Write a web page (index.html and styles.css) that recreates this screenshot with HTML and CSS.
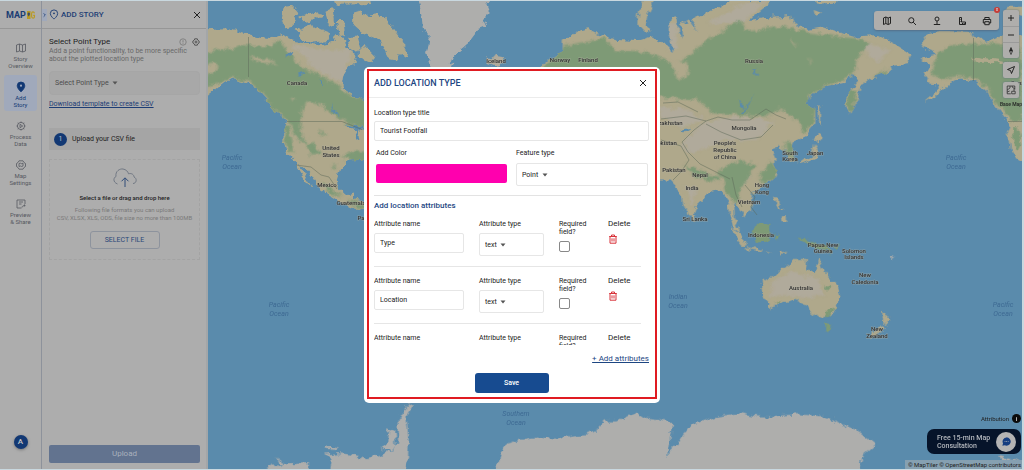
FILE: index.html
```html
<!DOCTYPE html>
<html lang="en">
<head>
<meta charset="utf-8">
<title>MAPOG - Add Story</title>
<link rel="stylesheet" href="styles.css">
</head>
<body>
<div class="app">
  <nav class="rail">
    <div class="logo">MAP<svg class="logo-mark" viewBox="0 0 10 10"><rect x="0" y="0" width="4.4" height="10" fill="#b99a22"/><path d="M2.2 2a1.5 1.5 0 0 1 1.5 1.5C3.700 5 2.200 7 2.200 7S.7 5 .7 3.500A1.500 1.500 0 0 1 2.200 2Z" fill="#3b4a63"/><path d="M9.200 3C9 .5 5.800.5 5.800 3v4c0 2.600 3.500 2.600 3.500.2V5.500H7.800" fill="none" stroke="#b99a22" stroke-width="1.500"/></svg></div>
    <div class="rail-items">
      <a class="rail-item" href="#"><svg class="ic" viewBox="0 0 12 12"><path d="M1.500 3v7l3-1 3 1 3-1V2l-3 1-3-1ZM4.500 2v7M7.500 3v7"/></svg>Story<br>Overview</a>
      <a class="rail-item active" href="#"><svg class="ic" viewBox="0 0 12 12"><path class="solid" d="M6 1a3.800 3.800 0 0 1 3.800 3.800C9.800 7.500 6 11 6 11S2.200 7.500 2.200 4.800A3.800 3.800 0 0 1 6 1Z"/><circle cx="6" cy="4.700" r="1.100" fill="#a1aabd" stroke="none"/></svg>Add<br>Story</a>
      <a class="rail-item" href="#"><svg class="ic" viewBox="0 0 12 12"><circle cx="6" cy="6" r="3.600"/><path d="M6 1.500v1M6 9.500v1M1.500 6h1M9.500 6h1M2.800 2.800l.7.7M8.500 8.500l.7.7M2.800 9.200l.7-.7M8.500 3.500l.7-.7M5 4.300v3.400L7.700 6Z"/></svg>Process<br>Data</a>
      <a class="rail-item" href="#"><svg class="ic" viewBox="0 0 12 12"><path d="M4 1.800h4L9 3.500l1.500 1V7.500L9 8.500 8 10.200H4L3 8.500l-1.500-1V4.500L3 3.500ZM4 4.500v3l1.400-.5 1.300.5L8 7V4.200l-1.300.5-1.300-.5Z"/></svg>Map<br>Settings</a>
      <a class="rail-item" href="#"><svg class="ic" viewBox="0 0 12 12"><path d="M10 6V2H2v8h4.500M4 4h4M4 6h2.500M7 9.500c.3-1.500 1-2 3-2M9 6.500l1.200 1L9 8.700"/></svg>Preview<br>&amp; Share</a>
    </div>
    <button class="avatar" type="button">A</button>
  </nav>

  <aside class="panel">
    <header class="panel-head">
      <button class="toggle" type="button" aria-label="Collapse"><svg class="ic" viewBox="0 0 6 8"><path d="M2 2l2 2-2 2"/></svg></button>
      <svg class="ic head-pin" viewBox="0 0 10 12"><path d="M5 1a4 4 0 0 1 4 4c0 2.800-4 6-4 6S1 7.800 1 5a4 4 0 0 1 4-4Z"/><circle cx="5" cy="4.700" r="1" fill="#1d3d75" stroke="none"/></svg>
      <h1>ADD STORY</h1>
      <button class="close" type="button" aria-label="Close"><svg viewBox="0 0 8 8"><path d="M1 1l6 6M7 1L1 7"/></svg></button>
    </header>
    <div class="panel-body">
      <div class="row-title"><h2>Select Point Type</h2>
        <svg class="ic tiny" viewBox="0 0 8 8"><circle cx="4" cy="4" r="3.200"/><path d="M4 2.200v2.300M4 5.200v.7"/></svg>
        <svg class="ic tiny dark" viewBox="0 0 8 8"><path d="M2.700.8h2.600l.3 1.200 1.500 1v2l-1.500 1-.3 1.200H2.700L2.400 6 .9 5V3l1.500-1Z"/><circle cx="4" cy="4" r="1"/></svg>
      </div>
      <p class="desc">Add a point functionality, to be more specific about the plotted location type</p>
      <label class="pick pick-dim"><select aria-label="Select Point Type"><option>Select Point Type</option></select><svg class="caret" viewBox="0 0 6 4"><path d="M.5.500h5L3 3.500Z"/></svg></label>
      <a class="template" href="#">Download template to create CSV</a>
      <div class="step"><span class="num">1</span>Upload your CSV file</div>
      <div class="drop">
        <svg class="cloud" viewBox="0 0 24 20"><path d="M4.500 16C-.5 14 .5 9.500 3 8.500 2 3 7 .5 10 1c3 .5 5 2.500 5.500 4.800C19 4.800 21 7 21 9c3.500 1.500 2.500 6.500-1 6.500" stroke="#727984"/><path d="M12 19V10M8.500 13.300L12 9.800l3.500 3.500" stroke="#304c79"/></svg>
        <strong>Select a file or drag and drop here</strong>
        <p>Following file formats you can upload<br>CSV, XLSX, XLS, ODS, file size no more than 100MB</p>
        <button class="select-file" type="button">SELECT FILE</button>
      </div>
      <button class="upload" type="button">Upload</button>
    </div>
  </aside>

  <main class="map">
    <svg class="world" viewBox="208 1 814 468" preserveAspectRatio="xMidYMid slice">
      <defs>
        <filter id="coast" x="190" y="-10" width="850" height="490" filterUnits="userSpaceOnUse" color-interpolation-filters="sRGB">
          <feTurbulence type="fractalNoise" baseFrequency="0.13" numOctaves="3" seed="4"/>
          <feDisplacementMap in="SourceGraphic" scale="8" xChannelSelector="R" yChannelSelector="G"/>
        </filter>
        <filter id="blend" x="-5%" y="-5%" width="110%" height="110%" color-interpolation-filters="sRGB"><feGaussianBlur stdDeviation="3"/></filter>
        <clipPath id="cNA"><path d="M0 88L60 85 110 98 150 108 200 115 235 102 262 122 300 128 345 136 385 128 395 105 420 115 425 145 455 165 450 185 432 200 415 225 412 250 430 278 470 297 490 290 650 300 650 420 490 475 470 480 430 482 405 510 396 540 400 570 420 585 448 578 446 598 490 608 490 640 440 622 390 598 345 568 322 530 300 503 272 492 245 455 232 410 246 365 215 335 180 295 150 262 120 245 90 236 60 245 0 292Z"/></clipPath>
        <clipPath id="cAS"><path d="M-260 205L-184 150-184 122-140 97-105 88-57 108-20 120 40 123 80 110 120 130 135 148 150 160 135 90 140 55 158 52 163 95 175 120 172 75 195 58 225 100 205 60 240 45 280 25 330 0 450 0 400 40 378 60 450 50 500 45 512 72 550 90 600 82 640 95 690 110 760 105 810 130 866 165 850 190 800 195 805 212 740 235 712 255 702 305 680 345 668 320 668 280 705 240 690 225 660 250 600 260 560 290 545 310 575 325 575 370 545 410 512 425 505 440 515 480 498 488 482 450 465 440 440 447 455 480 455 530 420 562 385 575 382 600 385 635 360 650 340 620 328 610 330 650 350 700 335 690 318 640 310 600 290 570 262 575 215 620 208 650 190 650 168 575 140 545 80 545-260 500Z"/></clipPath>
      </defs>
      <rect x="208" width="816" height="470" fill="#5a8bac"/>
      <g filter="url(#coast)">
        <g transform="translate(205 0) scale(.333)">
          <path class="tan" d="M0 88L60 85 110 98 150 108 200 115 235 102 262 122 300 128 345 136 385 128 395 105 420 115 425 145 455 165 450 185 432 200 415 225 412 250 430 278 470 297 490 290 650 300 650 420 490 475 470 480 430 482 405 510 396 540 400 570 420 585 448 578 446 598 490 608 490 640 440 622 390 598 345 568 322 530 300 503 272 492 245 455 232 410 246 365 215 335 180 295 150 262 120 245 90 236 60 245 0 292Z"/>
          <g clip-path="url(#cNA)"><g filter="url(#blend)">
            <path class="pale" d="M260 130L350 150 440 150 412 250 370 230 320 200Z"/>
            <path class="green" d="M0 155L60 150 110 135 180 142 225 122 250 160 300 205 350 228 400 255 430 285 500 300 600 330 600 400 480 385 430 370 390 345 350 315 300 305 290 330 285 400 310 430 280 420 250 365 210 330 170 280 130 242 80 232 50 245 0 262Z"/>
            <path class="green" d="M235 380L250 375 262 420 265 460 245 440ZM300 435l30-5 20 30-30 5ZM345 385l20 25-15-5ZM405 470l40-15 60 0v25l-60 5ZM395 490l-15 20 15-5ZM350 550l40 25 20 15-40-10ZM430 598l60 15v25l-50-20Z"/>
            <path class="tan" d="M130 170l70 10 20 12-60-4ZM255 290l20 8-10 5ZM0 195l35-5 10 15-45 25Z"/>
          </g></g>
          <path class="tan" d="M232 22L262 18 280 40 265 78 240 82 228 55ZM275 90L320 72 350 88 380 100 365 122 330 128 290 118ZM285 50l55-20 15 20-50 18ZM365 32l18-8 5 45-16 8ZM380 0L495 0 498 12 400 14ZM395 60l20 0 5 45-15 5ZM445 35L470 28 475 45 540 55 560 80 590 120 608 155 603 178 585 165 575 182 555 178 540 150 525 120 500 110 470 98 445 75ZM465 150l15-15 30 30-10 25-35-15ZM430 110l25 0 10 40-25 5ZM270 492l12 5 22 35 18 30-8-3-25-35ZM495 40l28-4 6 35-20 4Z"/>
          <path class="ice" d="M640 -10L862 -10 845 15 855 40 835 60 845 80 820 90 790 130 750 165 730 220 685 220 667 160 675 110 655 90 650 45Z"/>
          <path class="pale" d="M843 172L858 178 875 168 898 172 900 188 870 196 848 188Z"/>
          <path class="lake" d="M240 165l25-12-5 20ZM275 225l30-8-18 14ZM375 310l15 25 15 10-15-4ZM425 370l45 10 8 10-20-2 6 35-10-8-4-28ZM345 240l12 20-10-6Z"/>
        </g>
        <g transform="translate(624 0) scale(.333)">
          <path class="tan" d="M-260 205L-184 150-184 122-140 97-105 88-57 108-20 120 40 123 80 110 120 130 135 148 150 160 135 90 140 55 158 52 163 95 175 120 172 75 195 58 225 100 205 60 240 45 280 25 330 0 450 0 400 40 378 60 450 50 500 45 512 72 550 90 600 82 640 95 690 110 760 105 810 130 866 165 850 190 800 195 805 212 740 235 712 255 702 305 680 345 668 320 668 280 705 240 690 225 660 250 600 260 560 290 545 310 575 325 575 370 545 410 512 425 505 440 515 480 498 488 482 450 465 440 440 447 455 480 455 530 420 562 385 575 382 600 385 635 360 650 340 620 328 610 330 650 350 700 335 690 318 640 310 600 290 570 262 575 215 620 208 650 190 650 168 575 140 545 80 545-260 500Z"/>
          <g clip-path="url(#cAS)"><g filter="url(#blend)">
            <path class="pale" d="M250 70L350 15 430 0 350 70ZM130 70h30v80h-30ZM100 320L200 330 240 360 170 380 110 350ZM245 365L350 350 450 365 400 420 300 425 200 460 170 430ZM180 560l40 0-15 60ZM700 120l100 30-40 40ZM350 510l30 20-25 30Z"/>
            <path class="green" d="M-250 210L-180 140-60 115-30 150 60 155 110 175 150 195 210 160 240 125 300 90 350 60 370 95 480 78 540 95 640 110 700 115 735 130 700 170 690 225 600 260 555 290 575 320 570 370 540 400 530 370 470 325 420 350 350 345 270 340 220 300 140 295 60 290-60 290ZM670 270l30 0-10 60-15 10ZM280 515l60-30 60 5-20 30-30 50-10 50-30-40-10-40ZM440 485l15 10v40l-30 20-20-15ZM480 430l25 0 5 45-20-5ZM745 235l50-30-10 18ZM180 490l70 35 40 5-10 15-70-15Z"/>
            <path class="tan" d="M140 180l50 10 0 40-30 10ZM555 170l8 20-6 0ZM595 180l20 15ZM500 115l20 20-15-5Z"/>
          </g></g>
          <path class="tan" d="M60 0L92 0 70 45 66 75 80 98 62 95 40 72 42 45ZM575 0l60 0 0 8-55 3ZM570 30l22 8-20 8ZM580 405L600 412 578 428 570 418ZM574 432l10 20-8 22-35 15-22 5 18-14 30-12ZM584 320l8 0 0 55-6-10ZM450 592l10 0 5 30 15 12-18-8ZM468 650l18-2 0 18-16-2ZM385 575l12 0-3 12ZM453 520l8 0-4 15ZM208 642l8 8-4 12-6-8Z"/>
          <path class="tan" d="M890 130L915 98 950 92 1030 95 1060 112 1090 125 1130 110 1220 100 1220 500 1178 475 1160 450 1150 400 1158 370 1122 325 1095 280 1060 248 1010 236 975 250 940 285 900 308 940 272 955 255 910 250 897 215 922 200 895 187 895 172 930 165 925 150 900 142ZM1150 20l60 0 0 30-60-10Z"/>
          <path class="green" filter="url(#blend)" d="M940 160L1000 130 1045 135 1100 130 1195 140 1195 365 1165 360 1120 310 1090 262 1050 235 1000 228 960 240 925 225Z"/>
          <path class="green" d="M1168 385l14 0 10 45-10 20-12-20Z"/>
          <path class="tan" d="M1048 170l90 12 30 10-110-4Z"/>
          <path class="lake" d="M388 285l-8 30-20 25-6-3 22-22ZM345 295l15 25 0 8-10-10ZM170 390l30-6-20 14ZM385 208l15 0-2 16Z"/>
          <path class="green" d="M385 690L410 670 440 675 435 725 400 728Z"/>
        </g>
        <g transform="translate(624 235) scale(.333)">
          <path class="tan" d="M413 140L450 125 480 95 510 75 550 75 545 105 575 115 587 68 600 110 640 150 650 185 630 240 590 252 565 235 555 210 520 195 480 205 435 222 420 190ZM742 308l30-38 12 8-30 30-15 8ZM775 228l14 16 14 4-12 22-12-5ZM325-25L355 5 368 32 355 30 335 5ZM365 36l50 8 0 6-48-8ZM425 48l20 3-10 4ZM470 50l22-3-18 12Z"/>
          <path class="pale" filter="url(#blend)" d="M440 145L500 110 580 130 600 180 560 190 480 180 440 190Z"/>
          <path class="green" d="M605 268l16 2-5 20-12-5ZM520 8L560 14 605 32 625 55 590 45 550 30ZM445 210l30-12-10 10ZM628 215l8 5-22 28-15 2ZM450-5l15 5-4 20ZM600 148l25 10-15 5ZM630 35l20-5-15 12Z"/>
          <path class="ice" d="M-390 720L-357 630-317 620-247 605-207 615-157 602-107 598-77 580-57 560-20 560 0 550 40 532 70 552 145 562 130 660 150 640 200 570 280 545 350 535 400 545 440 545 520 538 600 545 700 585 755 630 720 660 700 720Z"/>
          <path class="ice" d="M795 70l18-5-12 10ZM1130 660l60 20 0 20-50-10Z"/>
        </g>
        <path class="ice" transform="translate(205 235) scale(.333)" d="M155 715L200 690 260 688 312 685 312 715ZM215 668l25 18-15 0ZM375 720L380 675 360 660 400 655 440 660 490 670 560 650 580 620 578 565 590 535 615 508 630 505 605 545 612 620 610 665 600 720ZM550 580l20 10 2 40-15 20-30-10 20-15ZM365 635l35 5-5 6-30-5Z"/>
      </g>
      <g class="borders">
        <path d="M248.500 37v40M287 121.500h55l20 8M973.500 38v43M1008 121.500h14M296 165l15 2 10 8 8 2 8 12M661 119l25-3 20 5 12-4 14 3 18 0 16-11 10 6 10 4M706 121l-12 9-12 12 6 10 12 12 20 10 10 5M706 124l15 8 20 8 20-3 12-12M661 140l20 6 8 14-8 12-8 8M732 177l4 18 6 12M663 103l15-1 20 10M745 185l10 12-4 10 6 8"/>
      </g>
      <g class="labels">
        <text x="297" y="85">Canada</text><text x="331" y="150">United</text><text x="331" y="157">States</text><text x="327" y="187">Mexico</text><text x="351" y="205">Guatemala</text><text x="361" y="220">Pa</text>
        <text x="496" y="63">Iceland</text><text x="560" y="62">Norway</text><text x="588" y="62">Finland</text>
        <text x="754" y="63">Russia</text><text x="667" y="125">Kazakhstan</text><text x="662" y="145">Uzbekistan</text><text x="744" y="130">Mongolia</text>
        <text x="725" y="145">People's</text><text x="725" y="152">Republic</text><text x="725" y="159">of China</text><text x="790" y="155">South</text><text x="790" y="161">Korea</text><text x="815" y="155">Japan</text>
        <text x="674" y="172">Pakistan</text><text x="700" y="177">Nepal</text><text x="692" y="190">India</text><text x="762" y="187">Hong</text><text x="762" y="194">Kong</text><text x="749" y="204">Vietnam</text><text x="695" y="221">Sri Lanka</text><text x="761" y="237">Indonesia</text>
        <text x="823" y="247">Papua New</text><text x="823" y="253">Guinea</text><text x="854" y="253">Solomon</text><text x="854" y="259">Islands</text><text x="865" y="277">New</text><text x="865" y="284">Caledonia</text><text x="801" y="290">Australia</text><text x="877" y="331">New</text><text x="877" y="338">Zealand</text><text x="1021" y="85">Canada</text>
      </g>
      <g class="seas">
        <text x="232" y="160">Pacific</text><text x="232" y="169">Ocean</text><text x="279" y="307">Pacific</text><text x="279" y="316">Ocean</text><text x="678" y="299">Indian</text><text x="678" y="308">Ocean</text><text x="956" y="160">Pacific</text><text x="956" y="169">Ocean</text><text x="1003" y="307">Pacific</text><text x="1003" y="316">Ocean</text><text x="516" y="416">Southern</text><text x="516" y="425">Ocean</text>
      </g>
    </svg>

    <div class="map-top">
      <div class="toolbar">
        <button type="button" aria-label="Map"><svg class="ic" viewBox="0 0 12 12"><path d="M2.500 3v6.500l2.300-1 2.400 1 2.300-1V2l-2.300 1-2.400-1ZM4.800 2v6.500M7.200 3v6.500"/></svg></button>
        <button type="button" aria-label="Search"><svg class="ic" viewBox="0 0 12 12"><circle cx="5.300" cy="5.300" r="2.600"/><path d="M7.300 7.300L10 10"/></svg></button>
        <button type="button" aria-label="Location"><svg class="ic" viewBox="0 0 12 12"><circle cx="6" cy="4" r="2"/><path d="M6 6v3M2.800 9.500h6.400"/></svg></button>
        <button type="button" aria-label="Measure"><svg class="ic" viewBox="0 0 12 12"><path d="M3.500 2.500h2v4.500h4v2.500h-6ZM3.500 4.500h1M3.500 6.500h1M6.500 9V8M8.200 9V8"/></svg></button>
        <button type="button" aria-label="Print"><svg class="ic" viewBox="0 0 12 12"><path d="M3.800 4V2.500h4.400V4M3.800 8H2.300V4.500h7.400V8H8.200M3.800 6.700h4.400v3H3.800Z"/></svg></button>
        <span class="badge">x</span>
      </div>
      <div class="controls">
        <div class="group">
          <button type="button" aria-label="Zoom in"><svg class="ic" viewBox="0 0 12 12"><path d="M6 3v6M3 6h6"/></svg></button>
          <button type="button" aria-label="Zoom out"><svg class="ic" viewBox="0 0 12 12"><path d="M3 6h6"/></svg></button>
          <button type="button" aria-label="North"><svg class="ic thin" viewBox="0 0 12 12"><path class="solid" d="M6 2.500L4.500 6h3Z"/><path d="M4.500 6L6 9.500 7.500 6"/></svg></button>
        </div>
        <div class="group"><button type="button" aria-label="Locate"><svg class="ic" viewBox="0 0 12 12"><path d="M9.500 2.500L2.500 5.500l3 1 1 3Z"/></svg></button></div>
        <div class="group"><button type="button" aria-label="Base map"><svg class="ic thin" viewBox="0 0 12 12"><path d="M9.800 5.500V2H2.200v7.800h3.600M5 2v2L2.200 6M7 2l1 2 1.800.5M2.200 8l2.500-1M6.700 7.300h3.500v2.500H6.700ZM8 6h2"/></svg></button></div>
        <span class="base">Base Map</span>
      </div>
    </div>
    <div class="map-bottom">
      <div class="attribution">Attribution <span class="info">i</span></div>
      <button class="consult" type="button"><span>Free 15-min Map<br>Consultation</span><span class="bubble"><svg viewBox="0 0 12 12"><path d="M6 1.500a4.500 4.500 0 1 1-2 8.500L1.500 10.500 2.200 8A4.500 4.500 0 0 1 6 1.500Z" fill="#153d80"/><path d="M4 6h.8M5.700 6h.8M7.400 6h.8" stroke="#b8b8b8"/></svg></span></button>
      <div class="copyright">© MapTiler © OpenStreetMap contributors</div>
    </div>
  </main>
</div>

<div class="overlay">
  <form class="dialog">
    <div class="frame">
      <header class="dialog-head"><h2>ADD LOCATION TYPE</h2><button class="close" type="button" aria-label="Close"><svg viewBox="0 0 8 8"><path d="M1 1l6 6M7 1L1 7"/></svg></button></header>
      <div class="dialog-body">
        <label class="field"><span>Location type title</span><input type="text" value="Tourist Footfall"></label>
        <div class="pair">
          <label class="field color"><span>Add Color</span><input type="color" value="#ff00ae"></label>
          <label class="field"><span>Feature type</span><span class="pick"><select><option>Point</option></select><svg class="caret" viewBox="0 0 6 4"><path d="M.5.500h5L3 3.500Z"/></svg></span></label>
        </div>
        <h3>Add location attributes</h3>
        <div class="attrs">
          <div class="attr">
            <label class="field"><span>Attribute name</span><input type="text" value="Type"></label>
            <label class="field"><span>Attribute type</span><span class="pick"><select><option>text</option></select><svg class="caret" viewBox="0 0 6 4"><path d="M.5.500h5L3 3.500Z"/></svg></span></label>
            <label class="req"><span>Required field?</span><input type="checkbox"></label>
            <div class="del"><span>Delete</span><button type="button" aria-label="Delete"><svg viewBox="0 0 10 10"><path d="M1.200 2.500h7.600M3.500 2.300V1h3v1.300M2 2.700V9.200h6V2.700M4 4.300v3.200M6 4.300v3.200"/></svg></button></div>
          </div>
          <div class="attr">
            <label class="field"><span>Attribute name</span><input type="text" value="Location"></label>
            <label class="field"><span>Attribute type</span><span class="pick"><select><option>text</option></select><svg class="caret" viewBox="0 0 6 4"><path d="M.5.500h5L3 3.500Z"/></svg></span></label>
            <label class="req"><span>Required field?</span><input type="checkbox"></label>
            <div class="del"><span>Delete</span><button type="button" aria-label="Delete"><svg viewBox="0 0 10 10"><path d="M1.200 2.500h7.600M3.500 2.300V1h3v1.300M2 2.700V9.200h6V2.700M4 4.300v3.200M6 4.300v3.200"/></svg></button></div>
          </div>
          <div class="attr">
            <div class="field"><span>Attribute name</span></div>
            <div class="field"><span>Attribute type</span></div>
            <div class="req"><span>Required field?</span></div>
            <div class="del"><span>Delete</span></div>
          </div>
        </div>
        <a class="add" href="#">+ Add attributes</a>
        <button class="save" type="button">Save</button>
      </div>
    </div>
  </form>
</div>
</body>
</html>
```
FILE: styles.css
```css
* { box-sizing: border-box; }
body { margin: 0; font: 7px/8px Roboto, "Liberation Sans", sans-serif; color: #222; background: #c9d8df; }
h1, h2, h3, p { margin: 0; font-weight: 500; }
button, input, select { font: inherit; color: inherit; margin: 0; padding: 0; border: 0; background: none; }
button { cursor: pointer; display: flex; align-items: center; justify-content: center; }
svg { display: block; }
.ic { fill: none; stroke: currentColor; stroke-width: 1; }
.ic .solid { fill: currentColor; }
.thin { stroke-width: .7; }

.app { display: flex; height: 100vh; padding: 1px 2px 1px 0; }

.rail { width: 42px; flex: none; display: flex; flex-direction: column; align-items: center; background: #adadad; border-right: 1px solid #8d929b; }
.logo { height: 28px; width: 100%; flex: none; display: flex; align-items: center; padding-left: 6px; border-bottom: 1px solid #969696; font-size: 9px; font-weight: 700; color: #1a3c72; }
.logo-mark { width: 10px; height: 8px; }
.rail-items { display: flex; flex-direction: column; gap: 3px; padding-top: 7px; }
.rail-item { width: 33px; height: 36px; padding-top: 6px; border-radius: 3px; text-align: center; font-size: 6px; line-height: 7px; color: #55585f; text-decoration: none; }
.rail-item .ic { width: 12px; height: 12px; margin: 0 auto 1px; stroke-width: .8; }
.rail-item.active { background: #a0a9bb; color: #123873; }
.avatar { width: 14px; height: 14px; margin: auto 0 20px; border-radius: 50%; background: #123873; color: #c4c4c4; font-size: 8px; font-weight: 500; box-shadow: 0 1px 3px #777; }

.panel { width: 166px; flex: none; display: flex; flex-direction: column; background: #adadad; border-right: 2px solid #a3a6a8; }
.panel-head { height: 28px; flex: none; display: flex; align-items: center; gap: 2px; padding-right: 5px; border-bottom: 1px solid #969696; color: #1d3d75; }
.panel-head h1 { font-size: 8px; font-weight: 500; margin-right: auto; }
.toggle { width: 5px; height: 12px; background: #a0a9bb; }
.toggle .ic { width: 5px; height: 8px; }
.head-pin { width: 10px; height: 11px; }
.close svg { width: 8px; height: 8px; fill: none; stroke: #222; stroke-width: 1; }
.panel-body { flex: 1; display: flex; flex-direction: column; padding: 8px 6px 6px 7px; }
.row-title { display: flex; align-items: center; gap: 5px; }
.row-title h2 { font-size: 8px; line-height: 9px; margin-right: auto; font-weight: 400; }
.tiny { width: 8px; height: 8px; color: #777; stroke-width: .8; }
.tiny.dark { color: #444; }
.desc { margin-top: 1px; color: #696969; font-weight: 400; }
.pick { display: flex; align-items: center; gap: 3px; padding: 0 5px; border: 1px solid #e6e6e6; border-radius: 2px; height: 23px; }
.pick select { appearance: none; outline: 0; }
.caret { width: 6px; height: 4px; fill: #555; }
.pick-dim { height: 24px; margin-top: 8px; background: #a8a8a8; border-color: #a6a6a6; border-radius: 4px; color: #4c4c4c; }
.template { margin-top: 5px; color: #1d3d75; }
.step { display: flex; align-items: center; gap: 5px; height: 22px; margin-top: 20px; padding-left: 5px; background: #a5a5a5; }
.num { width: 13px; height: 13px; border-radius: 50%; background: #123873; color: #b9c3d4; text-align: center; line-height: 13px; }
.drop { display: flex; flex-direction: column; align-items: center; margin-top: 9px; padding: 8px 0 10px; border: 1px dashed #a3a3a3; text-align: center; }
.cloud { width: 24px; height: 20px; fill: none; stroke-width: 1; }
.drop strong { margin-top: 6px; font-size: 6px; font-weight: 500; }
.drop p { margin-top: 4px; font-size: 6px; line-height: 8px; font-weight: 400; color: #7a7a7a; white-space: nowrap; }
.select-file { width: 70px; height: 18px; margin-top: 9px; border: 1px solid #8d939d; border-radius: 3px; color: #2a4778; font-weight: 400; }
.upload { height: 18px; margin-top: auto; background: #62738f; border-radius: 2px; color: #a9b1bd; font-size: 8px; }

.map { flex: 1; min-width: 0; position: relative; overflow: hidden; background: #5a8bac; }
.world { width: 100%; height: 100%; }
.tan { fill: #afa88b; }
.pale { fill: #b0aa9b; }
.green { fill: #7e9a76; }
.ice { fill: #aeaeac; }
.lake { fill: #5a8bac; }
.borders { fill: none; stroke: #5e6a59; stroke-width: 1; opacity: .5; }
.labels, .seas { font-size: 6px; text-anchor: middle; }
.labels { fill: #333; font-weight: 500; stroke: #b5b4a5; stroke-opacity: .5; stroke-width: 1; paint-order: stroke; }
.seas { fill: #3e6a93; font-size: 7px; font-style: italic; }
.map-top { position: absolute; top: 9px; right: 3px; display: flex; align-items: flex-start; gap: 4px; color: #222; }
.map-top .ic { width: 12px; height: 12px; }
.toolbar { position: relative; width: 125px; height: 19px; margin-top: 1px; display: flex; background: #afaeac; border-radius: 3px; box-shadow: 0 1px 2px #54708a; }
.toolbar button { flex: 1; }
.badge { position: absolute; top: -4px; right: -1px; width: 6px; height: 6px; border-radius: 50%; background: #c63c36; color: #ddd; font-size: 5px; line-height: 5px; text-align: center; }
.controls { display: flex; flex-direction: column; align-items: center; gap: 4px; width: 16px; }
.group { width: 16px; background: #afaeac; border-radius: 2px; box-shadow: 0 0 2px #5c7180; }
.group button { width: 16px; height: 16px; }
.group button + button { border-top: 1px solid #9a9a9a; }
.base { font-size: 5px; line-height: 5px; white-space: nowrap; font-weight: 500; }
.map-bottom { position: absolute; right: 0; bottom: 0; display: flex; flex-direction: column; align-items: flex-end; }
.attribution { display: flex; align-items: center; gap: 3px; margin: 0 1px 6px 0; font-size: 6px; }
.info { width: 9px; height: 9px; border-radius: 50%; background: #0b0b0b; color: #ccc; font-weight: 700; text-align: center; line-height: 9px; }
.consult { width: 94px; height: 25px; margin-right: 1px; padding: 0 5px 0 10px; justify-content: space-between; border-radius: 7px; background: #06142a; color: #b4b8be; font-size: 7px; font-weight: 500; text-align: left; }
.bubble { width: 20px; height: 20px; border-radius: 50%; background: #b4b4b4; display: flex; align-items: center; justify-content: center; }
.bubble svg { width: 11px; height: 11px; }
.copyright { margin-top: 6px; padding: 1px 1px 0 3px; background: #86a0b1; font-size: 6px; color: #222; }

.overlay { position: fixed; inset: 0; display: flex; align-items: center; justify-content: center; }
.dialog { width: 296px; padding: 2px 3px 4px; background: #fff; border-radius: 5px; }
.frame { border: 2px solid #e01b22; }
.dialog-head { display: flex; align-items: center; justify-content: space-between; height: 27px; padding: 0 8px 3px 5px; border-bottom: 1px solid #ececec; color: #1d4682; }
.dialog-head h2 { font-size: 9px; font-weight: 500; }
.dialog-head .close svg { width: 8px; height: 8px; }
.dialog-body { display: flex; flex-direction: column; padding: 11px 6px 4px 5px; }
.field { display: flex; flex-direction: column; gap: 4px; }
.field input[type="text"] { height: 20px; padding: 0 5px; border: 1px solid #e6e6e6; border-radius: 2px; width: 100%; outline: 0; }
.pair { display: grid; grid-template-columns: 131px 132px; gap: 9px; padding: 8px 2px 9px; margin-right: 8px; border-bottom: 1px solid #e3e3e3; }
.pair .field { gap: 6px; }
.color input { appearance: none; height: 19px; width: 100%; margin-top: 1px; }
.color input::-webkit-color-swatch-wrapper { padding: 0; }
.color input::-webkit-color-swatch { border: 0; border-radius: 2px; }
.dialog-body h3 { margin-top: 5px; font-size: 8px; line-height: 9px; font-weight: 500; color: #1d4682; }
.attrs { height: 129px; margin-top: 6px; padding-top: 4px; overflow: hidden; }
.attr { display: grid; grid-template-columns: 90px 65px 34px 1fr; column-gap: 15px; height: 47px; margin: 0 8px 10px 0; border-bottom: 1px solid #e6e6e6; }
.attr .field { gap: 5px; }
.req { display: flex; flex-direction: column; align-items: flex-start; gap: 5px; }
.req input { appearance: none; width: 11px; height: 11px; border: 1px solid #888; border-radius: 2px; }
.del { display: flex; flex-direction: column; align-items: flex-start; gap: 6px; font-size: 8px; }
.del svg { width: 10px; height: 10px; fill: none; stroke: #d8333a; stroke-width: 1; }
.add { align-self: flex-end; margin-top: 9px; font-size: 8px; line-height: 9px; color: #1d4682; }
.save { align-self: center; width: 74px; height: 20px; margin-top: 10px; background: #174b90; color: #fff; border-radius: 3px; font-weight: 500; }
```
